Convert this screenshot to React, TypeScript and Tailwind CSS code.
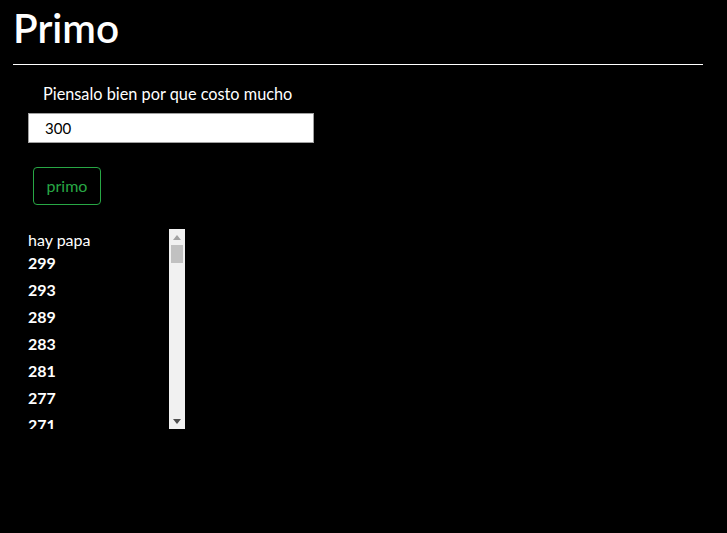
import React from "react";

const nums = ["299", "293", "289", "283", "281", "277", "271"];

export default function App() {
  return (
    <div className="min-h-[533px] w-full bg-black text-white" style={{ fontFamily: "Lato, 'Noto Sans', sans-serif" }}>
      <h1 className="pl-[13px] pt-[4px] text-[40.5px] leading-[48px] font-semibold">Primo</h1>
      <div className="ml-[13px] mt-[12px] h-px w-[690px] bg-white" />
      <div className="pl-[28px] pt-[19px]">
        <div className="pl-[15px] text-[16.3px] leading-[20px]">Piensalo bien por que costo mucho</div>
        <div className="mt-[9px] flex h-[30px] w-[286px] items-center border border-[#a0a0a0] bg-white pl-[16px] text-[15px] text-black">
          300
        </div>
        <button className="ml-[5px] mt-[24px] flex h-[38px] w-[68px] items-center justify-center rounded-[4px] border border-[#28a745] text-[16px] text-[#28a745]">
          primo
        </button>
        <div className="mt-[24px] flex h-[200px] w-[157px]">
          <div className="flex-1 overflow-hidden pt-[1px]">
            <div className="text-[16px] leading-[20px]">hay papa</div>
            <div className="-mt-[1px]">
              {nums.map((n) => (
                <div key={n} className="h-[27px] text-[16px] font-bold leading-[27px]">
                  {n}
                </div>
              ))}
            </div>
          </div>
          <div className="flex w-[16px] flex-col bg-[#f1f1f1]">
            <div className="flex h-[16px] items-center justify-center">
              <svg width="8" height="5" viewBox="0 0 8 5"><polygon points="4,0 8,5 0,5" fill="#a3a3a3" /></svg>
            </div>
            <div className="mx-[2px] h-[18px] bg-[#c1c1c1]" />
            <div className="flex-1" />
            <div className="flex h-[16px] items-center justify-center">
              <svg width="8" height="5" viewBox="0 0 8 5"><polygon points="0,0 8,0 4,5" fill="#505050" /></svg>
            </div>
          </div>
        </div>
      </div>
    </div>
  );
}
